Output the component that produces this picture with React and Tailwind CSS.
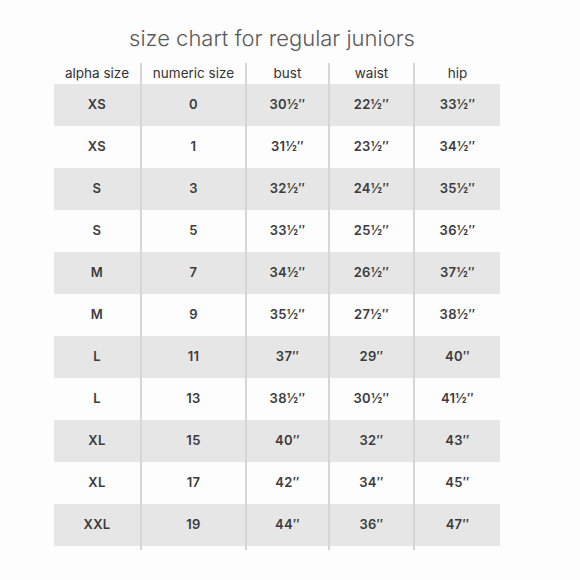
import React from 'react';

const columns = ['alpha size', 'numeric size', 'bust', 'waist', 'hip'];

const rows = [
  ['XS', '0', '30½″', '22½″', '33½″'],
  ['XS', '1', '31½″', '23½″', '34½″'],
  ['S', '3', '32½″', '24½″', '35½″'],
  ['S', '5', '33½″', '25½″', '36½″'],
  ['M', '7', '34½″', '26½″', '37½″'],
  ['M', '9', '35½″', '27½″', '38½″'],
  ['L', '11', '37″', '29″', '40″'],
  ['L', '13', '38½″', '30½″', '41½″'],
  ['XL', '15', '40″', '32″', '43″'],
  ['XL', '17', '42″', '34″', '45″'],
  ['XXL', '19', '44″', '36″', '47″'],
];

function Cell({ index, className, children }) {
  return (
    <div
      className={`flex items-center justify-center ${
        index > 0 ? 'border-l-2 border-[#d6d6d6]' : ''
      } ${className}`}
    >
      {children}
    </div>
  );
}

export default function App() {
  return (
    <div className="w-[580px] h-[580px] bg-[#fdfdfd] font-['Inter',sans-serif]">
      <div className="ml-[54px] w-[446px] pt-[24px]">
        <h1 className="text-center text-[22px] leading-[28px] font-light text-[#5a5a5a] pr-[10px]">
          size chart for regular juniors
        </h1>
        <div className="mt-[11px] grid grid-cols-[86px_105px_83px_85px_87px]">
          {columns.map((col, i) => (
            <Cell key={col} index={i} className="h-[21px] text-[13.5px] text-[#333]">
              {col}
            </Cell>
          ))}
          {rows.map((row, r) =>
            row.map((val, i) => (
              <Cell
                key={`${r}-${i}`}
                index={i}
                className={`h-[42px] text-[13px] font-semibold tracking-[0.3px] text-[#3c3c3c] ${
                  r % 2 === 0 ? 'bg-[#e6e6e6]' : ''
                }`}
              >
                {val}
              </Cell>
            ))
          )}
          {columns.map((col, i) => (
            <Cell key={`end-${col}`} index={i} className="h-[4px]" />
          ))}
        </div>
      </div>
    </div>
  );
}
